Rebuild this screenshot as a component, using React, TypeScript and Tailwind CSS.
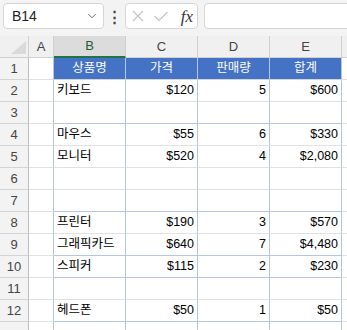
import { ChevronDown } from 'lucide-react';

type Row = { n: number; cells?: string[]; header?: boolean };

const rows: Row[] = [
  { n: 1, header: true, cells: ['상품명', '가격', '판매량', '합계'] },
  { n: 2, cells: ['키보드', '$120', '5', '$600'] },
  { n: 3 },
  { n: 4, cells: ['마우스', '$55', '6', '$330'] },
  { n: 5, cells: ['모니터', '$520', '4', '$2,080'] },
  { n: 6 },
  { n: 7 },
  { n: 8, cells: ['프린터', '$190', '3', '$570'] },
  { n: 9, cells: ['그래픽카드', '$640', '7', '$4,480'] },
  { n: 10, cells: ['스피커', '$115', '2', '$230'] },
  { n: 11 },
  { n: 12, cells: ['헤드폰', '$50', '1', '$50'] },
  { n: 13 },
];

// rows whose bottom edge carries the table's blue border
const blueBottom = [3, 7, 9, 10, 12];

const font = "font-['Liberation_Sans','Noto_Sans_CJK_KR',sans-serif]";

function FormulaBar() {
  return (
    <div className="h-[36px] bg-[#f3f3f3] flex items-start pt-[3px] pl-[3px]">
      <div className="w-[101px] h-[26px] bg-white border border-[#d6d6d6] rounded-[4px] flex items-center justify-between pl-[8px] pr-[4px]">
        <span className="text-[14px] text-[#222]">B14</span>
        <ChevronDown size={14} strokeWidth={1.5} className="text-[#555]" />
      </div>
      <div className="w-[21px] h-[26px] flex items-center justify-center text-[#444] text-[15px] font-bold leading-none">
        ⋮
      </div>
      <div className="w-[73px] h-[26px] bg-white border border-[#d6d6d6] rounded-[4px] flex items-center pl-[5px] pr-[4px] gap-[8px]">
        <svg width="14" height="14" viewBox="0 0 14 14">
          <path d="M2 2 L12 12 M12 2 L2 12" stroke="#c4c4c4" strokeWidth="1.2" fill="none" />
        </svg>
        <svg width="16" height="14" viewBox="0 0 16 14">
          <path d="M1.5 7 L6 11.5 L14.5 3" stroke="#c4c4c4" strokeWidth="1.2" fill="none" />
        </svg>
        <span className="ml-auto italic text-[17px] leading-none text-[#333] font-['Liberation_Serif',serif]">fx</span>
      </div>
      <div className="ml-[6px] flex-1 -mr-[6px] h-[26px] bg-white border border-[#d6d6d6] rounded-[4px]" />
    </div>
  );
}

function ColumnHeader() {
  const cols = [
    { l: 'A', w: 'w-[25px]', sel: false },
    { l: 'B', w: 'w-[72px]', sel: true },
    { l: 'C', w: 'w-[72px]', sel: false },
    { l: 'D', w: 'w-[72px]', sel: false },
    { l: 'E', w: 'w-[72px]', sel: false },
  ];
  return (
    <div className="flex h-[22px] bg-[#f0f0f0]">
      <div className="w-[29px] shrink-0 relative border-r border-[#d0d0d0] border-b border-b-[#d0d0d0]">
        <svg className="absolute left-[11px] top-[5px]" width="16" height="14" viewBox="0 0 16 14">
          <polygon points="0,13 15,13 15,0" fill="#dadada" />
        </svg>
      </div>
      {cols.map((c) => (
        <div
          key={c.l}
          className={
            c.sel
              ? `${c.w} shrink-0 flex items-center justify-center text-[13px] text-[#1d5e37] bg-[#dcdcdc] border-r border-[#d0d0d0] border-b-2 border-b-[#217346]`
              : `${c.w} shrink-0 flex items-center justify-center text-[13px] text-[#444] border-r border-[#d0d0d0] border-b border-b-[#d0d0d0]`
          }
        >
          {c.l}
        </div>
      ))}
      <div className="flex-1 border-b border-[#d0d0d0]" />
    </div>
  );
}

function GridRow({ row }: { row: Row }) {
  const blue = blueBottom.includes(row.n);
  const bottom = blue ? 'border-b-[#b4c6e7]' : 'border-b-[#e1e1e1]';
  const cells = row.cells ?? ['', '', '', ''];
  return (
    <div className="flex h-[22px] shrink-0">
      <div className="w-[29px] shrink-0 bg-[#f3f3f3] border-r border-r-[#bdbdbd] border-b border-b-[#d4d4d4] flex items-center justify-center text-[13px] text-[#444]">
        {row.n < 13 ? row.n : ''}
      </div>
      <div className="w-[25px] shrink-0 border-r border-r-[#b4c6e7] border-b border-b-[#e1e1e1]" />
      {cells.map((t, i) => (
        <div
          key={i}
          className={
            row.header
              ? `w-[72px] shrink-0 bg-[#4472c4] text-white border-r border-r-[#b4c6e7] border-b border-b-[#d4d4d4] flex items-center justify-center text-[12.5px]`
              : i === 0
                ? `w-[72px] shrink-0 border-r border-r-[#b4c6e7] border-b ${bottom} flex items-center pl-[3px] text-[12.5px] text-black`
                : `w-[72px] shrink-0 border-r border-r-[#b4c6e7] border-b ${bottom} flex items-center justify-end pr-[3px] text-[12.5px] text-black`
          }
        >
          {t}
        </div>
      ))}
      <div className="flex-1 border-b border-[#e1e1e1]" />
    </div>
  );
}

export default function App() {
  return (
    <div className={`w-[347px] h-[330px] overflow-hidden bg-white ${font}`}>
      <FormulaBar />
      <ColumnHeader />
      {rows.map((r) => (
        <GridRow key={r.n} row={r} />
      ))}
    </div>
  );
}
